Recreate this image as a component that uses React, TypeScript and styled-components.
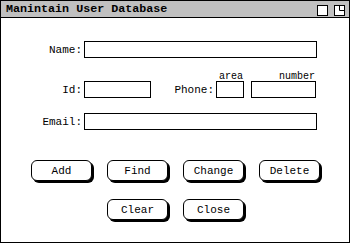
import React from 'react'
import styled, { createGlobalStyle } from 'styled-components'

const Global = createGlobalStyle`
  html, body { margin: 0; padding: 0; background: #fff; }
  * { box-sizing: border-box; }
`

const mono = `"Liberation Mono", "DejaVu Sans Mono", monospace`

const Window = styled.div`
  width: 350px;
  height: 243px;
  border: 1px solid #000;
  background: #fff;
  display: flex;
  flex-direction: column;
  font-family: ${mono};
  color: #000;
`

const TitleBar = styled.div`
  height: 17px;
  flex: none;
  background: #c0c0c0;
  border-bottom: 1px solid #000;
  display: flex;
  align-items: center;
  padding: 0 4px 0 5px;
`

const Title = styled.div`
  flex: 1;
  font-size: 11.7px;
  font-weight: bold;
  line-height: 16px;
`

const WinButtons = styled.div`
  display: flex;
  gap: 6px;
  margin-top: 3px;
`

const WinBox = styled.svg`
  display: block;
`

const Body = styled.div`
  flex: 1;
  display: flex;
  flex-direction: column;
`

const Row = styled.div<{ $top: number }>`
  display: flex;
  align-items: flex-end;
  margin-top: ${p => p.$top}px;
`

const Label = styled.label<{ $w: number }>`
  width: ${p => p.$w}px;
  text-align: right;
  font-size: 11px;
  line-height: 16px;
  margin-right: 2px;
  flex: none;
`

const Input = styled.input<{ $w: number }>`
  width: ${p => p.$w}px;
  height: 17px;
  border: 1px solid #000;
  border-radius: 0;
  background: #fff;
  padding: 0 2px;
  margin: 0;
  font-family: ${mono};
  font-size: 11px;
  outline: none;
  flex: none;
`

const SubField = styled.div<{ $gap: number }>`
  display: flex;
  flex-direction: column;
  align-items: flex-end;
  margin-left: ${p => p.$gap}px;
`

const SubLabel = styled.span`
  font-size: 10px;
  line-height: 9px;
  height: 9px;
  margin-right: 1px;
`

const ButtonRow = styled.div<{ $top: number }>`
  display: flex;
  justify-content: center;
  gap: 15px;
  margin-top: ${p => p.$top}px;
  padding-left: 1px;
`

const Button = styled.button`
  width: 61px;
  height: 21px;
  border: 1px solid #000;
  border-radius: 6px;
  background: #fff;
  box-shadow: 2px 2px 0 #000;
  font-family: ${mono};
  font-size: 11px;
  color: #000;
  padding: 0;
  line-height: 18px;
`

function BoxIcon({ zoom }: { zoom?: boolean }) {
  return (
    <WinBox width="11" height="11" viewBox="0 0 11 11">
      <rect x="0.5" y="0.5" width="10" height="10" fill="#fff" stroke="#000" />
      {zoom && <path d="M5.5 0.5V5.5H10.5" fill="none" stroke="#000" />}
    </WinBox>
  )
}

export default function App() {
  return (
    <>
      <Global />
      <Window>
        <TitleBar>
          <Title>Manintain User Database</Title>
          <WinButtons>
            <BoxIcon />
            <BoxIcon zoom />
          </WinButtons>
        </TitleBar>
        <Body>
          <Row $top={23}>
            <Label $w={81}>Name:</Label>
            <Input $w={233} />
          </Row>
          <Row $top={14}>
            <Label $w={81}>Id:</Label>
            <Input $w={67} />
            <Label $w={63}>Phone:</Label>
            <SubField $gap={0}>
              <SubLabel>area</SubLabel>
              <Input $w={28} />
            </SubField>
            <SubField $gap={7}>
              <SubLabel>number</SubLabel>
              <Input $w={65} />
            </SubField>
          </Row>
          <Row $top={15}>
            <Label $w={81}>Email:</Label>
            <Input $w={233} />
          </Row>
          <ButtonRow $top={30}>
            <Button>Add</Button>
            <Button>Find</Button>
            <Button>Change</Button>
            <Button>Delete</Button>
          </ButtonRow>
          <ButtonRow $top={18}>
            <Button>Clear</Button>
            <Button>Close</Button>
          </ButtonRow>
        </Body>
      </Window>
    </>
  )
}
